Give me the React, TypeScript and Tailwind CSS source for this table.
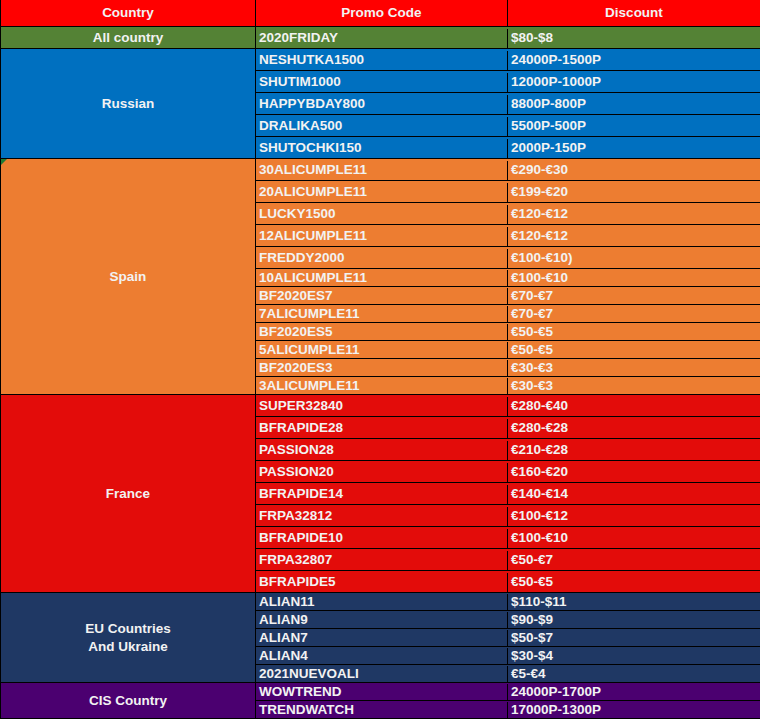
type Row = { code: string; discount: string; h: 'tall' | 'short' }

interface Group {
  country: string[]
  bg: string
  rows: Row[]
  marker?: boolean
}

const groups: Group[] = [
  {
    country: ['All country'],
    bg: 'bg-[#548235]',
    rows: [{ code: '2020FRIDAY', discount: '$80-$8', h: 'tall' }],
  },
  {
    country: ['Russian'],
    bg: 'bg-[#0070c0]',
    rows: [
      { code: 'NESHUTKA1500', discount: '24000P-1500P', h: 'tall' },
      { code: 'SHUTIM1000', discount: '12000P-1000P', h: 'tall' },
      { code: 'HAPPYBDAY800', discount: '8800P-800P', h: 'tall' },
      { code: 'DRALIKA500', discount: '5500P-500P', h: 'tall' },
      { code: 'SHUTOCHKI150', discount: '2000P-150P', h: 'tall' },
    ],
  },
  {
    country: ['Spain'],
    bg: 'bg-[#ed7d31]',
    marker: true,
    rows: [
      { code: '30ALICUMPLE11', discount: '€290-€30', h: 'tall' },
      { code: '20ALICUMPLE11', discount: '€199-€20', h: 'tall' },
      { code: 'LUCKY1500', discount: '€120-€12', h: 'tall' },
      { code: '12ALICUMPLE11', discount: '€120-€12', h: 'tall' },
      { code: 'FREDDY2000', discount: '€100-€10)', h: 'tall' },
      { code: '10ALICUMPLE11', discount: '€100-€10', h: 'short' },
      { code: 'BF2020ES7', discount: '€70-€7', h: 'short' },
      { code: '7ALICUMPLE11', discount: '€70-€7', h: 'short' },
      { code: 'BF2020ES5', discount: '€50-€5', h: 'short' },
      { code: '5ALICUMPLE11', discount: '€50-€5', h: 'short' },
      { code: 'BF2020ES3', discount: '€30-€3', h: 'short' },
      { code: '3ALICUMPLE11', discount: '€30-€3', h: 'short' },
    ],
  },
  {
    country: ['France'],
    bg: 'bg-[#e30c0a]',
    rows: [
      { code: 'SUPER32840', discount: '€280-€40', h: 'tall' },
      { code: 'BFRAPIDE28', discount: '€280-€28', h: 'tall' },
      { code: 'PASSION28', discount: '€210-€28', h: 'tall' },
      { code: 'PASSION20', discount: '€160-€20', h: 'tall' },
      { code: 'BFRAPIDE14', discount: '€140-€14', h: 'tall' },
      { code: 'FRPA32812', discount: '€100-€12', h: 'tall' },
      { code: 'BFRAPIDE10', discount: '€100-€10', h: 'tall' },
      { code: 'FRPA32807', discount: '€50-€7', h: 'tall' },
      { code: 'BFRAPIDE5', discount: '€50-€5', h: 'tall' },
    ],
  },
  {
    country: ['EU Countries', 'And Ukraine'],
    bg: 'bg-[#1f3864]',
    rows: [
      { code: 'ALIAN11', discount: '$110-$11', h: 'short' },
      { code: 'ALIAN9', discount: '$90-$9', h: 'short' },
      { code: 'ALIAN7', discount: '$50-$7', h: 'short' },
      { code: 'ALIAN4', discount: '$30-$4', h: 'short' },
      { code: '2021NUEVOALI', discount: '€5-€4', h: 'short' },
    ],
  },
  {
    country: ['CIS Country'],
    bg: 'bg-[#4b0070]',
    rows: [
      { code: 'WOWTREND', discount: '24000P-1700P', h: 'short' },
      { code: 'TRENDWATCH', discount: '17000P-1300P', h: 'short' },
    ],
  },
]

export default function App() {
  return (
    <div className="w-[760px] h-[719px] bg-white overflow-hidden font-['Liberation_Sans',Arial,sans-serif] font-bold text-[13.5px] text-[#f2f2f2]">
      <div className="border-l border-black">
        {/* Header */}
        <div className="flex h-[27px] bg-[#ff0000] border-b border-black">
          <div className="w-[255px] shrink-0 border-r border-black flex items-center justify-center">Country</div>
          <div className="w-[252px] shrink-0 border-r border-black flex items-center justify-center">Promo Code</div>
          <div className="flex-1 flex items-center justify-center">Discount</div>
        </div>

        {groups.map((g, gi) => (
          <div key={gi} className={`flex ${g.bg}`}>
            <div className="relative w-[255px] shrink-0 border-r border-b border-black flex flex-col items-center justify-center leading-[18px] pt-px">
              {g.marker && (
                <svg className="absolute left-0 top-0" width="6" height="6" viewBox="0 0 6 6">
                  <polygon points="0,0 6,0 0,6" fill="#1e7b34" />
                </svg>
              )}
              {g.country.map((line, li) => (
                <span key={li}>{line}</span>
              ))}
            </div>
            <div className="flex-1 flex flex-col">
              {g.rows.map((r, ri) => (
                <div key={ri} className={`flex border-b border-black ${r.h === 'tall' ? 'h-[22px] pt-[2px]' : 'h-[18px] pt-px'}`}>
                  <div className="w-[252px] shrink-0 border-r border-black flex items-center pl-[3px]">{r.code}</div>
                  <div className="flex-1 flex items-center pl-[3px]">{r.discount}</div>
                </div>
              ))}
            </div>
          </div>
        ))}
      </div>
    </div>
  )
}
